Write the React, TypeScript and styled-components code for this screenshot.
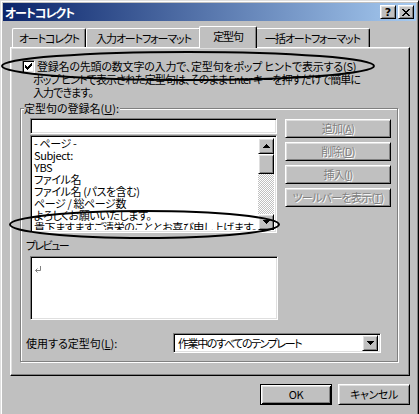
import React from "react";
import styled, { createGlobalStyle, css } from "styled-components";

const Global = createGlobalStyle`
  html, body { margin: 0; padding: 0; background: #c0c0c0; overflow: hidden; }
  body {
    font-family: "Noto Sans CJK JP", "Noto Sans", sans-serif;
    font-size: 11px;
    line-height: 13px;
    color: #000;
    font-feature-settings: "palt";
  }
  * { box-sizing: border-box; }
`;

const raised = css`
  background: #c0c0c0;
  border: 1px solid;
  border-color: #fff #000 #000 #fff;
  box-shadow: inset 1px 1px #dfdfdf, inset -1px -1px #808080;
`;

const sunken = css`
  background: #fff;
  border: 1px solid;
  border-color: #808080 #fff #fff #808080;
  box-shadow: inset 1px 1px #000, inset -1px -1px #dfdfdf;
`;

const Window = styled.div`
  position: relative;
  width: 419px;
  height: 418px;
  background: #c0c0c0;
  border: 1px solid;
  border-color: #dfdfdf #000 #000 #dfdfdf;
  box-shadow: inset 1px 1px #fff, inset -1px -1px #808080;
  padding: 2px;
  display: flex;
  flex-direction: column;
`;

const TitleBar = styled.div`
  height: 18px;
  display: flex;
  align-items: center;
  padding: 0 2px 0 2px;
  background: linear-gradient(to right, #0a246a, #a6caf0);
`;

const TitleText = styled.div`
  flex: 1;
  color: #fff;
  font-weight: bold;
  font-size: 12px;
  letter-spacing: -1.1px;
  white-space: nowrap;
`;

const CaptionButtons = styled.div`
  display: flex;
  gap: 2px;
`;

const CaptionButton = styled.div`
  ${raised};
  width: 16px;
  height: 14px;
  display: flex;
  align-items: center;
  justify-content: center;
`;

const Question = styled.span`
  font-family: "DejaVu Sans", sans-serif;
  font-weight: bold;
  font-size: 11px;
  line-height: 11px;
  margin-top: 1px;
`;

const Body = styled.div`
  flex: 1;
  padding: 5px 0 0 7px;
  display: flex;
  flex-direction: column;
`;

const TabRow = styled.div`
  position: relative;
  z-index: 1;
  height: 21px;
  display: flex;
  align-items: flex-end;
  padding-left: 2px;
`;

const Tab = styled.div<{ $w: number; $active?: boolean }>`
  position: relative;
  z-index: ${(p) => (p.$active ? 2 : 1)};
  width: ${(p) => p.$w}px;
  height: ${(p) => (p.$active ? 22 : 19)}px;
  margin: ${(p) => (p.$active ? "0 -2px -1px" : "0")};
  padding-bottom: ${(p) => (p.$active ? 2 : 0)}px;
  background: #c0c0c0;
  border-top: 1px solid #fff;
  border-left: 1px solid #fff;
  border-right: 1px solid #000;
  border-radius: 2px 2px 0 0;
  box-shadow: inset -1px 0 #808080;
  display: flex;
  align-items: center;
  justify-content: center;
  white-space: nowrap;
  letter-spacing: -1.1px;
`;

const Panel = styled.div`
  width: 400px;
  height: 329px;
  border: 1px solid;
  border-color: #fff #000 #000 #fff;
  box-shadow: inset -1px -1px #808080, inset 1px 1px #dfdfdf;
  padding: 12px 0 0 9px;
  display: flex;
  flex-direction: column;
`;

const CheckRow = styled.div`
  display: flex;
  align-items: center;
  gap: 2px;
  height: 13px;
  margin-left: 2px;
  white-space: nowrap;
  letter-spacing: -0.2px;
`;

const CheckBox = styled.div`
  ${sunken};
  width: 13px;
  height: 13px;
  flex: none;
  display: flex;
  align-items: center;
  justify-content: center;
`;

const Description = styled.div`
  margin-left: 13px;
  white-space: nowrap;
  letter-spacing: -0.9px;
`;

const U = styled.span`
  text-decoration: underline;
`;

const Group = styled.div`
  position: relative;
  margin-top: 9px;
  width: 378px;
  height: 254px;
  border: 1px solid #808080;
  box-shadow: inset 1px 1px #fff, 1px 1px #fff;
  padding: 9px 0 0 9px;
  display: flex;
  flex-direction: column;
`;

const Legend = styled.div`
  position: absolute;
  top: -7px;
  left: 3px;
  padding: 0 1px 0 0;
  background: #c0c0c0;
  white-space: nowrap;
`;

const TopRow = styled.div`
  display: flex;
  gap: 8px;
`;

const LeftCol = styled.div`
  width: 247px;
  display: flex;
  flex-direction: column;
`;

const EditBox = styled.div`
  ${sunken};
  height: 16px;
`;

const ListBox = styled.div`
  ${sunken};
  margin-top: 1px;
  height: 98px;
  padding: 2px;
  display: flex;
`;

const ListItems = styled.div`
  flex: 1;
  min-width: 0;
  overflow: hidden;
  padding-left: 1px;
`;

const ListItem = styled.div`
  height: 12px;
  line-height: 12px;
  white-space: nowrap;
  letter-spacing: -0.4px;
  &:first-child {
    margin-top: -1px;
  }
`;

const ScrollBar = styled.div`
  width: 16px;
  flex: none;
  display: flex;
  flex-direction: column;
`;

const ScrollButton = styled.div`
  ${raised};
  height: 16px;
  flex: none;
  display: flex;
  align-items: center;
  justify-content: center;
`;

const Thumb = styled.div`
  ${raised};
  height: 20px;
  flex: none;
`;

const Track = styled.div`
  flex: 1;
  background: repeating-conic-gradient(#c0c0c0 0 25%, #fff 0 50%) 0 0 / 2px 2px;
`;

const ButtonCol = styled.div`
  width: 106px;
  padding-top: 1px;
  display: flex;
  flex-direction: column;
  gap: 4px;
`;

const PushButton = styled.div<{ $disabled?: boolean }>`
  ${raised};
  height: 19px;
  display: flex;
  align-items: center;
  justify-content: center;
  white-space: nowrap;
  letter-spacing: -0.7px;
  color: ${(p) => (p.$disabled ? "#808080" : "#000")};
  text-shadow: ${(p) => (p.$disabled ? "1px 1px #fff" : "none")};
`;

const FieldLabel = styled.div`
  margin: 6px 0 0 -4px;
  white-space: nowrap;
  letter-spacing: -1.6px;
`;

const PreviewBox = styled.div`
  ${sunken};
  margin-top: 4px;
  width: 248px;
  height: 64px;
  padding: 5px 0 0 3px;
`;

const ComboRow = styled.div`
  margin-top: 13px;
  display: flex;
  align-items: center;
  height: 20px;
`;

const ComboLabel = styled.div`
  width: 147px;
  margin-left: -4px;
  white-space: nowrap;
`;

const Combo = styled.div`
  ${sunken};
  width: 208px;
  height: 20px;
  padding: 2px;
  display: flex;
  align-items: center;
`;

const ComboText = styled.div`
  flex: 1;
  padding-left: 2px;
  white-space: nowrap;
  overflow: hidden;
  letter-spacing: -1.4px;
`;

const DropButton = styled.div`
  ${raised};
  width: 16px;
  height: 16px;
  display: flex;
  align-items: center;
  justify-content: center;
`;

const ButtonRow = styled.div`
  width: 400px;
  margin-top: 8px;
  display: flex;
  justify-content: flex-end;
  gap: 6px;
`;

const DialogButton = styled.div<{ $default?: boolean }>`
  width: 72px;
  height: 21px;
  display: flex;
  align-items: center;
  justify-content: center;
  white-space: nowrap;
  letter-spacing: -0.4px;
  background: #c0c0c0;
  border: 1px solid;
  ${(p) =>
    p.$default
      ? css`
          border-color: #000;
          box-shadow: inset 1px 1px #fff, inset -1px -1px #000, inset 2px 2px #dfdfdf,
            inset -2px -2px #808080;
        `
      : css`
          border-color: #fff #000 #000 #fff;
          box-shadow: inset 1px 1px #dfdfdf, inset -1px -1px #808080;
        `}
`;

const Annotation = styled.svg`
  position: absolute;
  top: -1px;
  left: -1px;
  pointer-events: none;
  z-index: 5;
`;

const CloseIcon = () => (
  <svg width="8" height="7" viewBox="0 0 8 7">
    <path d="M0 0h2v1h1v1h2V1h1V0h2v1H7v1H6v1H5v1h1v1h1v1h1v1H6V6H5V5H3v1H2v1H0V6h1V5h1V4h1V3H2V2H1V1H0z" fill="#000" />
  </svg>
);

const CheckIcon = () => (
  <svg width="7" height="7" viewBox="0 0 7 7">
    <path d="M6 0h1v3H6v1H5v1H4v1H3v1H2V6H1V5H0V2h1v1h1v1h1V3h1V2h1V1h1z" fill="#000" />
  </svg>
);

const ArrowUp = () => (
  <svg width="7" height="4" viewBox="0 0 7 4">
    <path d="M3 0h1v1h1v1h1v1h1v1H0V3h1V2h1V1h1z" fill="#000" />
  </svg>
);

const ArrowDown = () => (
  <svg width="7" height="4" viewBox="0 0 7 4">
    <path d="M0 0h7v1H6v1H5v1H4v1H3V3H2V2H1V1H0z" fill="#000" />
  </svg>
);

const ReturnMark = () => (
  <svg width="8" height="7" viewBox="0 0 8 7">
    <path d="M6.5 0v4.5H1.5M3.5 2.5L1.5 4.5L3.5 6.5" stroke="#808080" strokeWidth="1" fill="none" />
  </svg>
);

const items = [
  "- ページ -",
  "Subject:",
  "YBS",
  "ファイル名",
  "ファイル名 (パスを含む)",
  "ページ / 総ページ数",
  "よろしくお願いいたします。",
  "貴下ますますご清栄のこととお喜び申し上げます。",
];

export default function App() {
  return (
    <>
      <Global />
      <Window>
        <TitleBar>
          <TitleText>オートコレクト</TitleText>
          <CaptionButtons>
            <CaptionButton>
              <Question>?</Question>
            </CaptionButton>
            <CaptionButton>
              <CloseIcon />
            </CaptionButton>
          </CaptionButtons>
        </TitleBar>
        <Body>
          <TabRow>
            <Tab $w={74}>オートコレクト</Tab>
            <Tab $w={115}>入力オートフォーマット</Tab>
            <Tab $w={58} $active>
              定型句
            </Tab>
            <Tab $w={115}>一括オートフォーマット</Tab>
          </TabRow>
          <Panel>
            <CheckRow>
              <CheckBox>
                <CheckIcon />
              </CheckBox>
              <span>
                登録名の先頭の数文字の入力で、定型句をポップ ヒントで表示する(<U>S</U>)
              </span>
            </CheckRow>
            <Description>
              <div>ポップ ヒントで表示された定型句は、そのまま Enter キーを押すだけで簡単に</div>
              <div>入力できます。</div>
            </Description>
            <Group>
              <Legend>
                定型句の登録名(<U>U</U>):
              </Legend>
              <TopRow>
                <LeftCol>
                  <EditBox />
                  <ListBox>
                    <ListItems>
                      {items.map((t) => (
                        <ListItem key={t}>{t}</ListItem>
                      ))}
                    </ListItems>
                    <ScrollBar>
                      <ScrollButton>
                        <ArrowUp />
                      </ScrollButton>
                      <Thumb />
                      <Track />
                      <ScrollButton>
                        <ArrowDown />
                      </ScrollButton>
                    </ScrollBar>
                  </ListBox>
                </LeftCol>
                <ButtonCol>
                  <PushButton $disabled>
                    追加(<U>A</U>)
                  </PushButton>
                  <PushButton $disabled>
                    削除(<U>D</U>)
                  </PushButton>
                  <PushButton $disabled>
                    挿入(<U>I</U>)
                  </PushButton>
                  <PushButton $disabled>
                    ツールバーを表示(<U>T</U>)
                  </PushButton>
                </ButtonCol>
              </TopRow>
              <FieldLabel>プレビュー</FieldLabel>
              <PreviewBox>
                <ReturnMark />
              </PreviewBox>
              <ComboRow>
                <ComboLabel>
                  使用する定型句(<U>L</U>):
                </ComboLabel>
                <Combo>
                  <ComboText>作業中のすべてのテンプレート</ComboText>
                  <DropButton>
                    <ArrowDown />
                  </DropButton>
                </Combo>
              </ComboRow>
            </Group>
          </Panel>
          <ButtonRow>
            <DialogButton $default>OK</DialogButton>
            <DialogButton>キャンセル</DialogButton>
          </ButtonRow>
        </Body>
        <Annotation width="419" height="414" viewBox="0 0 419 414">
          <ellipse cx="188" cy="66" rx="186" ry="14" fill="none" stroke="#000" strokeWidth="2" />
          <ellipse cx="144.5" cy="224.5" rx="134.5" ry="13.5" fill="none" stroke="#000" strokeWidth="2" />
        </Annotation>
      </Window>
    </>
  );
}
